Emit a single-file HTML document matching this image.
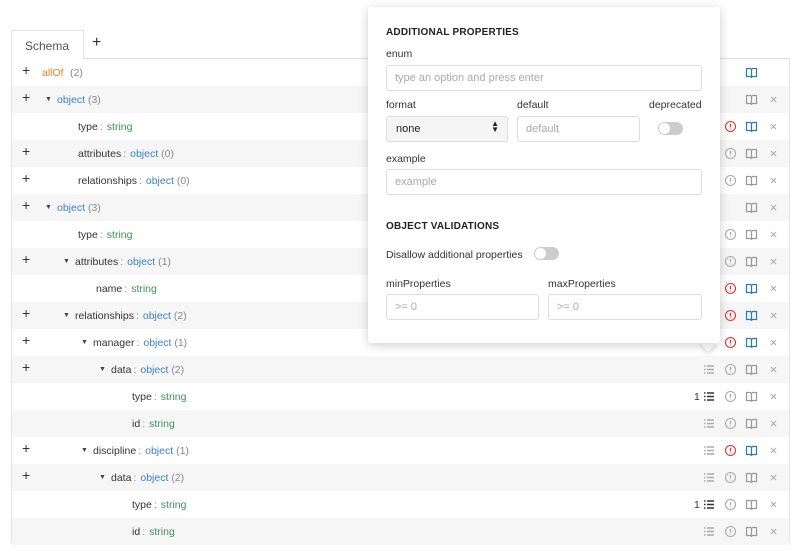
<!DOCTYPE html>
<html><head><meta charset="utf-8"><style>
body{margin:0;width:800px;height:551px;background:#fff;font-family:"Liberation Sans",sans-serif;position:relative;overflow:hidden}
.panel{position:absolute;left:11px;top:58px;width:779px;height:485px;border:1px solid #e3e3e3;border-top:1px solid #ddd;box-sizing:border-box}
.tab{position:absolute;left:11px;top:30px;width:73px;height:29px;border:1px solid #e3e3e3;border-bottom:none;background:#fff;box-sizing:border-box;font-size:12px;color:#555;padding:8px 0 0 13px;z-index:2}
.tplus{position:absolute;left:92px;top:34px;font-size:16px;color:#333}
.r{position:absolute;left:12px;width:777px;height:27px;font-size:10.5px;color:#333}
.g{background:#f6f6f6}
.r span{position:absolute;top:8px;white-space:nowrap}
.r span span{position:static}
.p{left:10px;font-size:14px;top:3px!important;color:#333}
.a{font-size:7px;top:10px!important;color:#444}
.o{color:#3b7fc4}.s{color:#3f8f5a}.c{color:#888}.y{color:#e0852b}
.k{margin:0 4px 0 2px;color:#888}
.ic{position:absolute;top:7px;width:13px;height:13px}
.pop{position:absolute;left:368px;top:7px;width:352px;height:336px;background:#fff;box-shadow:0 2px 10px rgba(0,0,0,.2);border-radius:3px;z-index:5;font-size:10.5px;color:#333}
.pop .l{position:absolute}
.in{position:absolute;border:1px solid #ddd;border-radius:3px;height:26px;box-sizing:border-box;font-size:11px;color:#aaa;padding:6px 8px}
.h{font-weight:bold;font-size:10px;letter-spacing:.2px;color:#222}
.tg{position:absolute;width:25px;height:13px;border-radius:7px;background:#ccc}
.tg:after{content:"";position:absolute;left:1px;top:1px;width:11px;height:11px;border-radius:50%;background:#fff}
.arrow{position:absolute;left:702px;top:337px;width:12px;height:12px;background:#fff;transform:rotate(45deg);box-shadow:2px 2px 4px rgba(0,0,0,.12);z-index:4}
</style></head><body>
<svg width="0" height="0" style="position:absolute"><defs>
<symbol id="info" viewBox="0 0 13 13"><circle cx="6.5" cy="6.5" r="5" fill="none" stroke="currentColor" stroke-width="1.1"/><path d="M6.5 3.8v3.6M6.5 8.6v.8" stroke="currentColor" stroke-width="1.3"/></symbol>
<symbol id="book" viewBox="0 0 13 13"><path d="M1.5 2.5h4l1 1 1-1h4v8h-4l-1 .8-1-.8h-4z M6.5 3.5v7.8" fill="none" stroke="currentColor" stroke-width="1.2"/></symbol>
<symbol id="x" viewBox="0 0 13 13"><path d="M4 4l5 5M9 4l-5 5" stroke="currentColor" stroke-width="1"/></symbol>
<symbol id="list" viewBox="0 0 13 13"><path d="M2 3h1.5M5 3h7M2 6.5h1.5M5 6.5h7M2 10h1.5M5 10h7" stroke="currentColor" stroke-width="1.4"/></symbol>
</defs></svg>

<div class="tab">Schema</div><div class="tplus">+</div>
<div class="panel"></div>

<div class="r" style="top:59px"><span class="p">+</span><span style="left:30px" class="y">allOf</span><span style="left:58px" class="c">(2)</span>
<svg class="ic" style="left:733px;color:#2a7ab8"><use href="#book"/></svg></div>

<div class="r g" style="top:86px"><span class="p">+</span><span class="a" style="left:33px">▼</span><span style="left:45px"><span class="o">object</span> <span class="c">(3)</span></span>
<svg class="ic" style="left:733px;color:#999"><use href="#book"/></svg><svg class="ic" style="left:755px;color:#aaa"><use href="#x"/></svg></div>

<div class="r" style="top:113px"><span style="left:66px">type<span class="k">:</span><span class="s">string</span></span>
<svg class="ic" style="left:712px;color:#d33"><use href="#info"/></svg><svg class="ic" style="left:733px;color:#2a7ab8"><use href="#book"/></svg><svg class="ic" style="left:755px;color:#aaa"><use href="#x"/></svg></div>

<div class="r g" style="top:140px"><span class="p">+</span><span style="left:66px">attributes<span class="k">:</span><span class="o">object</span> <span class="c">(0)</span></span>
<svg class="ic" style="left:712px;color:#aaa"><use href="#info"/></svg><svg class="ic" style="left:733px;color:#999"><use href="#book"/></svg><svg class="ic" style="left:755px;color:#aaa"><use href="#x"/></svg></div>

<div class="r" style="top:167px"><span class="p">+</span><span style="left:66px">relationships<span class="k">:</span><span class="o">object</span> <span class="c">(0)</span></span>
<svg class="ic" style="left:712px;color:#aaa"><use href="#info"/></svg><svg class="ic" style="left:733px;color:#999"><use href="#book"/></svg><svg class="ic" style="left:755px;color:#aaa"><use href="#x"/></svg></div>

<div class="r g" style="top:194px"><span class="p">+</span><span class="a" style="left:33px">▼</span><span style="left:45px"><span class="o">object</span> <span class="c">(3)</span></span>
<svg class="ic" style="left:733px;color:#999"><use href="#book"/></svg><svg class="ic" style="left:755px;color:#aaa"><use href="#x"/></svg></div>

<div class="r" style="top:221px"><span style="left:66px">type<span class="k">:</span><span class="s">string</span></span>
<svg class="ic" style="left:712px;color:#aaa"><use href="#info"/></svg><svg class="ic" style="left:733px;color:#999"><use href="#book"/></svg><svg class="ic" style="left:755px;color:#aaa"><use href="#x"/></svg></div>

<div class="r g" style="top:248px"><span class="p">+</span><span class="a" style="left:51px">▼</span><span style="left:63px">attributes<span class="k">:</span><span class="o">object</span> <span class="c">(1)</span></span>
<svg class="ic" style="left:712px;color:#aaa"><use href="#info"/></svg><svg class="ic" style="left:733px;color:#999"><use href="#book"/></svg><svg class="ic" style="left:755px;color:#aaa"><use href="#x"/></svg></div>

<div class="r" style="top:275px"><span style="left:84px">name<span class="k">:</span><span class="s">string</span></span>
<svg class="ic" style="left:712px;color:#d33"><use href="#info"/></svg><svg class="ic" style="left:733px;color:#2a7ab8"><use href="#book"/></svg><svg class="ic" style="left:755px;color:#aaa"><use href="#x"/></svg></div>

<div class="r g" style="top:302px"><span class="p">+</span><span class="a" style="left:51px">▼</span><span style="left:63px">relationships<span class="k">:</span><span class="o">object</span> <span class="c">(2)</span></span>
<svg class="ic" style="left:712px;color:#d33"><use href="#info"/></svg><svg class="ic" style="left:733px;color:#2a7ab8"><use href="#book"/></svg><svg class="ic" style="left:755px;color:#aaa"><use href="#x"/></svg></div>

<div class="r" style="top:329px"><span class="p">+</span><span class="a" style="left:69px">▼</span><span style="left:81px">manager<span class="k">:</span><span class="o">object</span> <span class="c">(1)</span></span>
<svg class="ic" style="left:712px;color:#d33"><use href="#info"/></svg><svg class="ic" style="left:733px;color:#2a7ab8"><use href="#book"/></svg><svg class="ic" style="left:755px;color:#aaa"><use href="#x"/></svg></div>

<div class="r g" style="top:356px"><span class="p">+</span><span class="a" style="left:87px">▼</span><span style="left:99px">data<span class="k">:</span><span class="o">object</span> <span class="c">(2)</span></span>
<svg class="ic" style="left:690px;color:#aaa"><use href="#list"/></svg><svg class="ic" style="left:712px;color:#aaa"><use href="#info"/></svg><svg class="ic" style="left:733px;color:#999"><use href="#book"/></svg><svg class="ic" style="left:755px;color:#aaa"><use href="#x"/></svg></div>

<div class="r" style="top:383px"><span style="left:120px">type<span class="k">:</span><span class="s">string</span></span><span style="left:682px">1</span>
<svg class="ic" style="left:690px;color:#333"><use href="#list"/></svg><svg class="ic" style="left:712px;color:#aaa"><use href="#info"/></svg><svg class="ic" style="left:733px;color:#999"><use href="#book"/></svg><svg class="ic" style="left:755px;color:#aaa"><use href="#x"/></svg></div>

<div class="r g" style="top:410px"><span style="left:120px">id<span class="k">:</span><span class="s">string</span></span>
<svg class="ic" style="left:690px;color:#aaa"><use href="#list"/></svg><svg class="ic" style="left:712px;color:#aaa"><use href="#info"/></svg><svg class="ic" style="left:733px;color:#999"><use href="#book"/></svg><svg class="ic" style="left:755px;color:#aaa"><use href="#x"/></svg></div>

<div class="r" style="top:437px"><span class="p">+</span><span class="a" style="left:69px">▼</span><span style="left:81px">discipline<span class="k">:</span><span class="o">object</span> <span class="c">(1)</span></span>
<svg class="ic" style="left:690px;color:#aaa"><use href="#list"/></svg><svg class="ic" style="left:712px;color:#d33"><use href="#info"/></svg><svg class="ic" style="left:733px;color:#2a7ab8"><use href="#book"/></svg><svg class="ic" style="left:755px;color:#aaa"><use href="#x"/></svg></div>

<div class="r g" style="top:464px"><span class="p">+</span><span class="a" style="left:87px">▼</span><span style="left:99px">data<span class="k">:</span><span class="o">object</span> <span class="c">(2)</span></span>
<svg class="ic" style="left:690px;color:#aaa"><use href="#list"/></svg><svg class="ic" style="left:712px;color:#aaa"><use href="#info"/></svg><svg class="ic" style="left:733px;color:#999"><use href="#book"/></svg><svg class="ic" style="left:755px;color:#aaa"><use href="#x"/></svg></div>

<div class="r" style="top:491px"><span style="left:120px">type<span class="k">:</span><span class="s">string</span></span><span style="left:682px">1</span>
<svg class="ic" style="left:690px;color:#333"><use href="#list"/></svg><svg class="ic" style="left:712px;color:#aaa"><use href="#info"/></svg><svg class="ic" style="left:733px;color:#999"><use href="#book"/></svg><svg class="ic" style="left:755px;color:#aaa"><use href="#x"/></svg></div>

<div class="r g" style="top:518px"><span style="left:120px">id<span class="k">:</span><span class="s">string</span></span>
<svg class="ic" style="left:690px;color:#aaa"><use href="#list"/></svg><svg class="ic" style="left:712px;color:#aaa"><use href="#info"/></svg><svg class="ic" style="left:733px;color:#999"><use href="#book"/></svg><svg class="ic" style="left:755px;color:#aaa"><use href="#x"/></svg></div>

<div class="arrow"></div>
<div class="pop">
<div class="l h" style="left:18px;top:20px">ADDITIONAL PROPERTIES</div>
<div class="l" style="left:18px;top:41px">enum</div>
<div class="in" style="left:18px;top:58px;width:316px">type an option and press enter</div>
<div class="l" style="left:18px;top:92px">format</div>
<div class="l" style="left:149px;top:92px">default</div>
<div class="l" style="left:281px;top:92px">deprecated</div>
<div class="in" style="left:18px;top:109px;width:122px;background:#f5f5f5;color:#222;padding-left:9px">none<span style="position:absolute;right:8px;top:4px;font-size:8px;line-height:6px">▲<br>▼</span></div>
<div class="in" style="left:149px;top:109px;width:123px">default</div>
<div class="tg" style="left:290px;top:115px"></div>
<div class="l" style="left:18px;top:146px">example</div>
<div class="in" style="left:18px;top:162px;width:316px">example</div>
<div class="l h" style="left:18px;top:214px">OBJECT VALIDATIONS</div>
<div class="l" style="left:18px;top:242px">Disallow additional properties</div>
<div class="tg" style="left:166px;top:240px"></div>
<div class="l" style="left:18px;top:271px">minProperties</div>
<div class="l" style="left:180px;top:271px">maxProperties</div>
<div class="in" style="left:18px;top:287px;width:153px">&gt;= 0</div>
<div class="in" style="left:180px;top:287px;width:154px">&gt;= 0</div>
</div>
</body></html>
